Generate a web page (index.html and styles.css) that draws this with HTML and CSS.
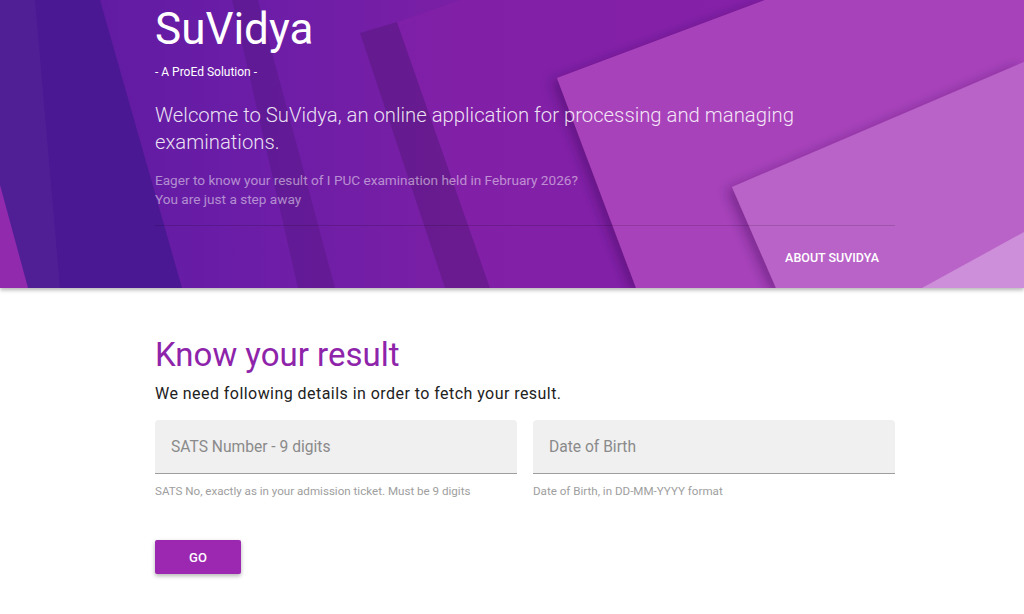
FILE: index.html
```html
<!DOCTYPE html>
<html lang="en">
<head>
<meta charset="utf-8">
<title>SuVidya - Know your result</title>
<link rel="stylesheet" href="styles.css">
</head>
<body>
<header class="hero">
  <svg class="hero-bg" viewBox="0 0 1024 288" preserveAspectRatio="none" aria-hidden="true">
    <defs>
      <linearGradient id="base" x1="0" y1="0" x2="1" y2="0">
        <stop offset="0" stop-color="#5a1a9f"/>
        <stop offset="0.25" stop-color="#6c1da7"/>
        <stop offset="0.45" stop-color="#7a1fa5"/>
        <stop offset="1" stop-color="#8e24aa"/>
      </linearGradient>
      <filter id="sh" x="-20%" y="-20%" width="140%" height="140%">
        <feDropShadow dx="-6" dy="3" stdDeviation="6" flood-color="#2a0040" flood-opacity="0.35"/>
      </filter>
    </defs>
    <rect width="1024" height="288" fill="url(#base)"/>
    <polygon points="0,0 100,0 182,288 0,288" fill="#4b1893"/>
    <polygon points="0,0 35,0 60,288 0,288" fill="#fff" fill-opacity="0.03"/>
    <polygon points="0,185 28,288 0,288" fill="#922aae"/>
    <polygon points="232,0 258,0 335,288 298,288" fill="#000" fill-opacity="0.1"/>
    <polygon points="360,33 397,22 490,288 445,288" fill="#000" fill-opacity="0.13"/>
    <polygon points="397,22 460,0 1024,0 1024,288 490,288" fill="#8621a9" fill-opacity="0.55"/>
    <polygon points="557,78 765,0 1024,0 1024,288 636,288" fill="#a843bb" filter="url(#sh)"/>
    <polygon points="732,187 1024,62 1024,288 776,288" fill="#b964c8" filter="url(#sh)"/>
    <polygon points="922,288 1024,232 1024,288" fill="#cd8fd9"/>
  </svg>
  <div class="hero-inner">
    <h1 class="brand">SuVidya</h1>
    <p class="tagline">- A ProEd Solution -</p>
    <p class="lead">Welcome to SuVidya, an online application for processing and managing examinations.</p>
    <p class="note">Eager to know your result of I PUC examination held in February 2026?<br>You are just a step away</p>
    <nav class="hero-nav">
      <a class="nav-link" href="#">ABOUT SUVIDYA</a>
    </nav>
  </div>
</header>
<main class="content">
  <h2 class="title">Know your result</h2>
  <p class="intro">We need following details in order to fetch your result.</p>
  <form class="form">
    <div class="fields">
      <div class="field">
        <div class="field-box"><span class="placeholder">SATS Number - 9 digits</span></div>
        <div class="help">SATS No, exactly as in your admission ticket. Must be 9 digits</div>
      </div>
      <div class="field">
        <div class="field-box"><span class="placeholder">Date of Birth</span></div>
        <div class="help">Date of Birth, in DD-MM-YYYY format</div>
      </div>
    </div>
    <button class="go" type="button">GO</button>
  </form>
</main>
</body>
</html>
```
FILE: styles.css
```css
* { box-sizing: border-box; }
html, body { margin: 0; padding: 0; }
body {
  font-family: Roboto, "Noto Sans", Arial, sans-serif;
  background: #ffffff;
  color: #222;
  width: 1024px;
  height: 614px;
  overflow: hidden;
}
.hero {
  position: relative;
  height: 288px;
  overflow: hidden;
  box-shadow: 0 2px 4px rgba(0,0,0,0.3);
  z-index: 1;
}
.hero-bg {
  position: absolute;
  inset: 0;
  width: 100%;
  height: 100%;
  z-index: 0;
}
.hero-inner {
  position: relative;
  z-index: 1;
  padding: 4px 129px 0 155px;
  display: flex;
  flex-direction: column;
  color: #fff;
}
.brand {
  margin: 0;
  font-size: 44px;
  line-height: 50px;
  font-weight: 400;
}
.tagline {
  margin: 11px 0 0;
  font-size: 12px;
  line-height: 14px;
}
.lead {
  margin: 23px 0 0;
  font-size: 20.3px;
  line-height: 27px;
  font-weight: 300;
  color: rgba(255,255,255,0.88);
}
.note {
  margin: 15px 0 0;
  font-size: 13.6px;
  line-height: 19px;
  color: rgba(255,255,255,0.5);
}
.hero-nav {
  margin-top: 16px;
  border-top: 1px solid rgba(0,0,0,0.14);
  display: flex;
  justify-content: flex-end;
  padding: 25px 16px 0 0;
}
.nav-link {
  color: #fff;
  text-decoration: none;
  font-size: 12.5px;
  font-weight: 500;
  line-height: 14px;
}
.content {
  padding: 48px 129px 0 155px;
}
.title {
  margin: 0;
  font-size: 33px;
  line-height: 38px;
  font-weight: 400;
  color: #8e24aa;
}
.intro {
  margin: 10px 0 0;
  font-size: 16px;
  line-height: 20px;
  letter-spacing: 0.45px;
  color: #222;
}
.form {
  margin-top: 16px;
}
.fields {
  display: grid;
  grid-template-columns: 1fr 1fr;
  gap: 16px;
}
.field-box {
  height: 54px;
  background: #f0f0f0;
  border-bottom: 1px solid #9e9e9e;
  border-radius: 4px 4px 0 0;
  display: flex;
  align-items: center;
  padding: 0 16px;
}
.placeholder {
  font-size: 15.6px;
  color: #8a8a8a;
}
.help {
  margin-top: 11px;
  font-size: 11.6px;
  line-height: 13px;
  color: #9e9e9e;
}
.go {
  margin-top: 42px;
  width: 86px;
  height: 34px;
  border: 0;
  border-radius: 2px;
  background: #9c27b0;
  color: #fff;
  font-family: Roboto, Arial, sans-serif;
  font-size: 13px;
  font-weight: 500;
  box-shadow: 0 2px 4px rgba(0,0,0,0.3);
}
```
